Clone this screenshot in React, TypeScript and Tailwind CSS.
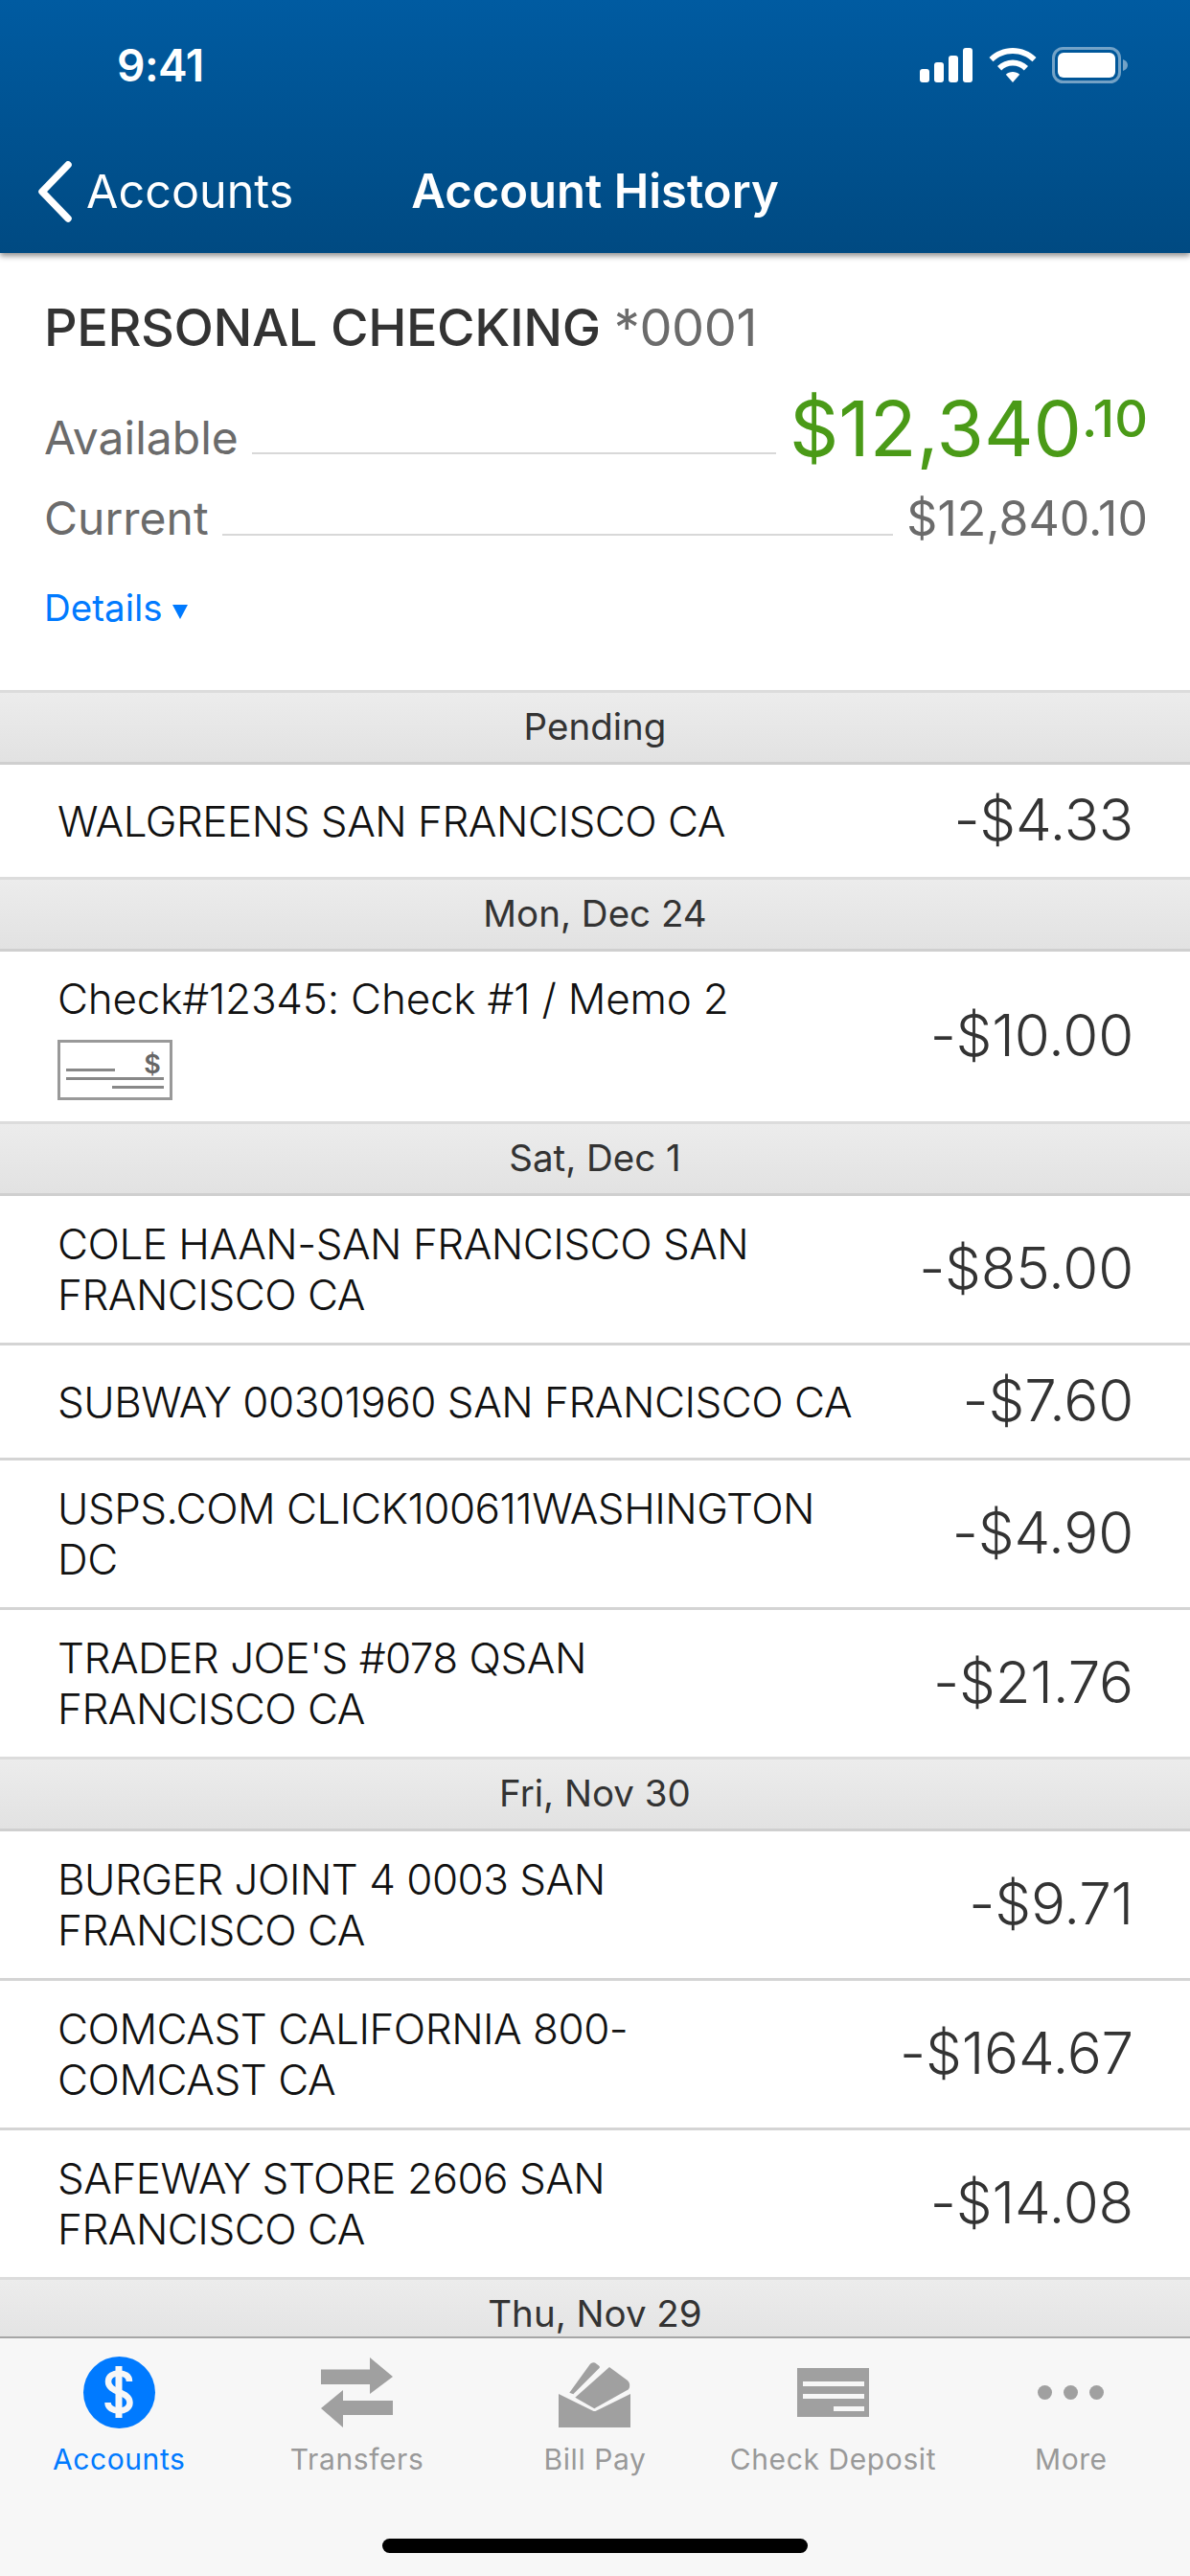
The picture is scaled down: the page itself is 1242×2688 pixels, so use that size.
const F = "font-['Inter','Liberation_Sans',sans-serif]";

type Row = { text: string; amount: string; check?: boolean };
type Group = { label: string; rows: Row[] };

const groups: Group[] = [
  { label: 'Pending', rows: [{ text: 'WALGREENS SAN FRANCISCO CA', amount: '-$4.33' }] },
  { label: 'Mon, Dec 24', rows: [{ text: 'Check#12345: Check #1 / Memo 2', amount: '-$10.00', check: true }] },
  {
    label: 'Sat, Dec 1',
    rows: [
      { text: 'COLE HAAN-SAN FRANCISCO SAN\nFRANCISCO CA', amount: '-$85.00' },
      { text: 'SUBWAY 00301960 SAN FRANCISCO CA', amount: '-$7.60' },
      { text: 'USPS.COM CLICK100611WASHINGTON\nDC', amount: '-$4.90' },
      { text: "TRADER JOE'S #078 QSAN\nFRANCISCO CA", amount: '-$21.76' },
    ],
  },
  {
    label: 'Fri, Nov 30',
    rows: [
      { text: 'BURGER JOINT 4 0003 SAN\nFRANCISCO CA', amount: '-$9.71' },
      { text: 'COMCAST CALIFORNIA 800-\nCOMCAST CA', amount: '-$164.67' },
      { text: 'SAFEWAY STORE 2606 SAN\nFRANCISCO CA', amount: '-$14.08' },
    ],
  },
  { label: 'Thu, Nov 29', rows: [] },
];

function StatusIcons() {
  return (
    <div className="flex items-center">
      <svg width="56" height="36" viewBox="0 0 56 36" fill="#fff">
        <rect x="0" y="22" width="10" height="14" rx="3" />
        <rect x="15" y="15" width="10" height="21" rx="3" />
        <rect x="30" y="8" width="10" height="28" rx="3" />
        <rect x="45" y="0" width="10" height="36" rx="3" />
      </svg>
      <svg className="ml-[16px]" width="50" height="36" viewBox="0 0 50 36" fill="#fff">
        <path d="M25 0C15.500 0 7 3.800 0.500 10L4.500 14.300C10 9 17 6 25 6C33 6 40 9 45.500 14.300L49.500 10C43 3.800 34.500 0 25 0Z" />
        <path d="M25 12.500C19 12.500 13.500 14.800 9 19L13.200 23.400C16.300 20.400 20.500 18.500 25 18.500C29.500 18.500 33.700 20.400 36.800 23.400L41 19C36.500 14.800 31 12.500 25 12.500Z" />
        <path d="M25 25C22.200 25 19.800 26 17.800 27.800L25 36L32.200 27.800C30.200 26 27.800 25 25 25Z" />
      </svg>
      <svg className="ml-[16px]" width="80" height="38" viewBox="0 0 80 38" fill="none">
        <rect x="1.500" y="1.500" width="69" height="35" rx="10" stroke="#fff" strokeOpacity="0.45" strokeWidth="3" />
        <rect x="6" y="6" width="60" height="26" rx="6" fill="#fff" />
        <path d="M74 13C77 14 79 16 79 19C79 22 77 24 74 25Z" fill="#fff" fillOpacity="0.45" />
      </svg>
    </div>
  );
}

function CheckThumb() {
  return (
    <svg className="mt-[16px] block" width="120" height="63" viewBox="0 0 120 63" fill="none">
      <rect x="1.500" y="1.500" width="117" height="60" fill="#fff" stroke="#999" strokeWidth="3" />
      <rect x="9" y="30" width="51" height="3" fill="#888" />
      <rect x="9" y="39" width="102" height="3" fill="#888" />
      <rect x="57" y="48" width="54" height="3" fill="#888" />
      <text x="99" y="35" textAnchor="middle" fontSize="27" fontWeight="600" fill="#666" fontFamily="Inter, sans-serif">$</text>
    </svg>
  );
}

function SectionHeader({ label }: { label: string }) {
  return (
    <div className="h-[78px] shrink-0 flex items-center justify-center border-y-[3px] border-t-[#dcdcdc] border-b-[#cfcfcf] bg-gradient-to-b from-[#ececec] to-[#e2e2e2] text-[38.5px] text-[#333]">
      {label}
    </div>
  );
}

function TxRow({ row, last }: { row: Row; last: boolean }) {
  // the last row of a day has no rule, the next section's top border closes it
  const size = row.check ? 'h-[177px]' : 'pt-[24px] pb-[23px]';
  const rule = last ? 'min-h-[117px]' : 'min-h-[120px] border-b-[3px] border-[#d4d4d4]';
  return (
    <div className={`flex items-center justify-between pl-[60px] pr-[59px] ${size} ${rule}`}>
      <div className={`text-[44px] leading-[53px] text-[#111] font-light whitespace-pre-line ${row.check ? 'tracking-[-0.2px]' : 'tracking-[-0.5px]'}`}>
        {row.text}
        {row.check && <CheckThumb />}
      </div>
      <div className="mb-[3px] text-[60px] leading-[53px] tracking-[-0.2px] text-[#333] font-light whitespace-nowrap">{row.amount}</div>
    </div>
  );
}

function TabItem({ label, active, children }: { label: string; active?: boolean; children: React.ReactNode }) {
  return (
    <div className="flex-1 flex flex-col items-center">
      <div className="h-[76px] w-[76px] flex items-center justify-center">{children}</div>
      <div className={`mt-[14px] text-[30px] leading-[36px] tracking-[0.6px] ${active ? 'text-[#007aff]' : 'text-[#999]'}`}>{label}</div>
    </div>
  );
}

export default function App() {
  return (
    <div className={`${F} w-[1242px] h-[2688px] flex flex-col overflow-hidden bg-white`}>
      <header className="relative z-10 h-[264px] shrink-0 bg-gradient-to-b from-[#005ba1] to-[#004a82] shadow-[0_3px_6px_rgba(0,0,0,0.45)] text-white">
        <div className="flex items-center justify-between h-[136px] pl-[122px] pr-[64px]">
          <div className="text-[46px] font-semibold tracking-[-0.5px]">9:41</div>
          <StatusIcons />
        </div>
        <div className="relative flex items-center justify-center h-[128px]">
          <div className="absolute left-[38px] top-[32px] flex items-center">
            <svg width="38" height="64" viewBox="0 0 38 64" fill="none">
              <path d="M33 4L6 32L33 60" stroke="#fff" strokeWidth="7.500" strokeLinecap="round" strokeLinejoin="round" />
            </svg>
            <span className="ml-[14px] text-[48.500px] leading-[56px]">Accounts</span>
          </div>
          <div className="text-[49px] leading-[56px] font-semibold">Account History</div>
        </div>
      </header>

      <main className="flex-1 min-h-0 overflow-hidden">
        <section className="h-[456px] pt-[48px] pl-[46px] pr-[44px]">
          <div className="text-[54px] leading-[60px] tracking-[-0.4px] font-medium text-[#333]">
            PERSONAL CHECKING <span className="font-normal text-[#6b6b6b]">*0001</span>
          </div>
          <div className="mt-[29px] flex items-end text-[#6b6b6b]">
            <span className="text-[48px] leading-[72px]">Available</span>
            <div className="flex-1 mx-[14px] mb-[19px] border-b-[2px] border-[#d8d8d8]" />
            <span className="flex items-start text-[#4a9a17] text-[80px] leading-[92px]">
              $12,340<span className="text-[54px] leading-[72px] font-medium">.10</span>
            </span>
          </div>
          <div className="mt-[16px] flex items-end text-[#6b6b6b]">
            <span className="text-[48px] leading-[64px]">Current</span>
            <div className="flex-1 mx-[14px] mb-[14px] border-b-[2px] border-[#d8d8d8]" />
            <span className="text-[50px] leading-[64px]">$12,840.10</span>
          </div>
          <div className="mt-[37px] flex items-center text-[38.500px] leading-[48px] text-[#007aff]">
            Details
            <svg className="ml-[10px] mt-[8px]" width="16" height="15" viewBox="0 0 16 15" fill="#007aff">
              <path d="M0 0H16L8 15Z" />
            </svg>
          </div>
        </section>

        {groups.map((g) => (
          <div key={g.label}>
            <SectionHeader label={g.label} />
            {g.rows.map((r, i) => (
              <TxRow key={r.text} row={r} last={i === g.rows.length - 1} />
            ))}
          </div>
        ))}
      </main>

      <nav className="h-[250px] shrink-0 relative bg-[#f7f7f7] border-t-[2px] border-[#a6a6a6] pt-[18px]">
        <div className="flex">
          <TabItem label="Accounts" active>
            <div className="w-[75px] h-[75px] rounded-full bg-[#007aff] flex items-center justify-center">
              <svg width="30" height="54" viewBox="0 0 30 54" fill="none">
                <path d="M15 0V54" stroke="#f7f7f7" strokeWidth="7" />
                <path d="M26 16C26 10 21 7.500 15 7.500C9 7.500 4 10.500 4 16C4 22 9 24.500 15 27C21 29.500 26.500 32 26.500 38C26.500 44 21 46.500 15 46.500C9 46.500 3.500 43.500 3.500 38" stroke="#f7f7f7" strokeWidth="6.500" />
              </svg>
            </div>
          </TabItem>
          <TabItem label="Transfers">
            <svg width="75" height="73" viewBox="0 0 75 73" fill="#a0a0a0">
              <path d="M0 12.500H51V0L75 20L51 38V28H0Z" />
              <path d="M75 45H23V34L0 53L23 73V60H75Z" />
            </svg>
          </TabItem>
          <TabItem label="Bill Pay">
            <svg className="mt-[6px]" width="76" height="68" viewBox="0 0 76 68" fill="#a0a0a0">
              <path d="M0 33L35.500 50.500Q37.500 51.500 39.500 50.500L75 33V68H0Z" />
              <path d="M11.300 31.700L33 1.700Q35 -0.500 38 0.500L42 3.500Q43.500 5 42.500 6L15.300 33.300Z" />
              <path d="M17.300 36.700L53 5L72 19Q76 23 73 28.300L37.300 48.300Z" />
            </svg>
          </TabItem>
          <TabItem label="Check Deposit">
            <div className="w-[75px] h-[51px] bg-[#a0a0a0] flex flex-col items-end pt-[14px] pr-[5px] gap-[8px]">
              <div className="w-[64px] h-[5px] bg-[#f7f7f7]" />
              <div className="w-[64px] h-[5px] bg-[#f7f7f7]" />
              <div className="w-[32px] h-[5px] bg-[#f7f7f7]" />
            </div>
          </TabItem>
          <TabItem label="More">
            <div className="flex gap-[12px]">
              <div className="w-[15px] h-[15px] rounded-full bg-[#a0a0a0]" />
              <div className="w-[15px] h-[15px] rounded-full bg-[#a0a0a0]" />
              <div className="w-[15px] h-[15px] rounded-full bg-[#a0a0a0]" />
            </div>
          </TabItem>
        </div>
        <div className="absolute left-[399px] bottom-[24px] w-[444px] h-[15px] rounded-full bg-black" />
      </nav>
    </div>
  );
}
